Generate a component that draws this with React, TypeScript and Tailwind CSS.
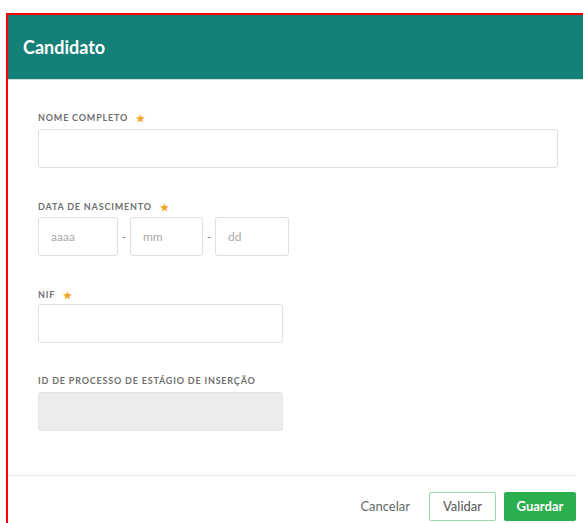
import React, { useState } from 'react';

const font = { fontFamily: '"Lato", "Noto Sans", sans-serif' };

const Label: React.FC<{ text: string; required?: boolean }> = ({ text, required }) => (
  <div className="flex items-center text-[9px] font-bold leading-[12px] tracking-[0.09em] text-[#6f6f6f] uppercase">
    <span>{text}</span>
    {required && <span className="ml-[8px] text-[10px] text-[#f5a623]">★</span>}
  </div>
);

const inputBase =
  'h-[39px] shrink-0 rounded-[3px] border px-[12px] text-[12px] text-[#333] placeholder:text-[#aaa] outline-none';

const App: React.FC = () => {
  const [nome, setNome] = useState('');
  const [ano, setAno] = useState('');
  const [mes, setMes] = useState('');
  const [dia, setDia] = useState('');
  const [nif, setNif] = useState('');

  return (
    <div className="h-[523px] w-[583px] overflow-hidden bg-white pl-[6px] pt-[13px]" style={font}>
      <div className="flex w-[600px] flex-col border-l-2 border-t-2 border-[#ff0000] bg-white pb-[40px]">
        {/* header */}
        <div className="flex h-[65px] shrink-0 items-center border-b border-[#cfe2e0] bg-[#148078] px-[15px]">
          <h2 className="text-[18px] font-bold text-white">Candidato</h2>
        </div>

        {/* form body */}
        <div className="flex flex-col px-[30px] pt-[32px]">
          <Label text="Nome completo" required />
          <input
            className={`${inputBase} mt-[5px] w-[520px] border-[#e3dddd] bg-white`}
            value={nome}
            onChange={(e) => setNome(e.target.value)}
          />

          <div className="mt-[33px]">
            <Label text="Data de nascimento" required />
          </div>
          <div className="mt-[4px] flex items-center">
            <input
              className={`${inputBase} w-[80px] border-[#e3dddd] bg-white`}
              placeholder="aaaa"
              value={ano}
              onChange={(e) => setAno(e.target.value)}
            />
            <span className="w-[12px] text-center text-[12px] text-[#888]">-</span>
            <input
              className={`${inputBase} w-[73px] border-[#e3dddd] bg-white`}
              placeholder="mm"
              value={mes}
              onChange={(e) => setMes(e.target.value)}
            />
            <span className="w-[12px] text-center text-[12px] text-[#888]">-</span>
            <input
              className={`${inputBase} w-[74px] border-[#e3dddd] bg-white`}
              placeholder="dd"
              value={dia}
              onChange={(e) => setDia(e.target.value)}
            />
          </div>

          <div className="mt-[33px]">
            <Label text="NIF" required />
          </div>
          <input
            className={`${inputBase} mt-[3px] w-[245px] border-[#e3dddd] bg-white`}
            value={nif}
            onChange={(e) => setNif(e.target.value)}
          />

          <div className="mt-[32px]">
            <Label text="ID de processo de estágio de inserção" />
          </div>
          <input
            disabled
            className={`${inputBase} mt-[5px] w-[245px] border-[#e6e6e6] bg-[#ececec]`}
          />
        </div>

        {/* footer */}
        <div className="mt-[44px] flex w-[568px] shrink-0 items-center justify-end gap-[7px] border-t border-[#ece6e8] pt-[16px]">
          <button className="h-[29px] px-[12px] text-[13px] text-[#5f6b66]">Cancelar</button>
          <button className="h-[29px] w-[67px] rounded-[2px] border border-[#9cd9ab] bg-white text-[13px] text-[#555]">
            Validar
          </button>
          <button className="ml-[1px] h-[29px] w-[72px] rounded-[2px] bg-[#2bae4d] text-[13px] font-bold text-white">
            Guardar
          </button>
        </div>
      </div>
    </div>
  );
};

export default App;
